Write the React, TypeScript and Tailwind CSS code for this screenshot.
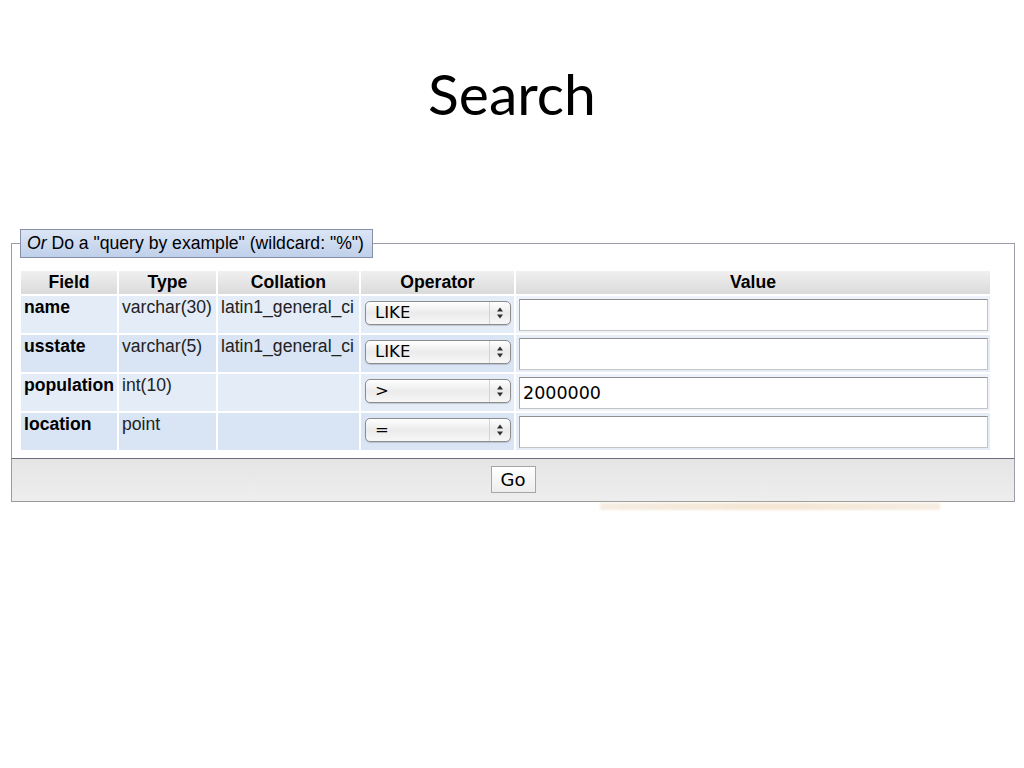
import * as React from "react"

type Row = {
  field: string
  type: string
  collation: string
  operator: string
  value: string
}

const rows: Row[] = [
  { field: "name", type: "varchar(30)", collation: "latin1_general_ci", operator: "LIKE", value: "" },
  { field: "usstate", type: "varchar(5)", collation: "latin1_general_ci", operator: "LIKE", value: "" },
  { field: "population", type: "int(10)", collation: "", operator: ">", value: "2000000" },
  { field: "location", type: "point", collation: "", operator: "=", value: "" },
]

const headers = ["Field", "Type", "Collation", "Operator", "Value"]

function SelectBox({ label }: { label: string }) {
  return (
    <div className="mt-[5px] ml-[4px] flex h-[24px] w-[146px] items-center rounded-[5px] border border-[#8c8c8c] bg-linear-to-b from-white via-[#ebebeb] to-[#f7f7f7] shadow-[0_1px_1px_rgba(0,0,0,0.15)]">
      <span className="flex-1 pl-[9px] font-['DejaVu_Sans',sans-serif] text-[16.5px] leading-none text-black">
        {label}
      </span>
      <span className="flex h-full w-[21px] items-center justify-center border-l border-[#d4d4d4]">
        <svg width="8" height="14" viewBox="0 0 8 14" aria-hidden="true">
          <path d="M4 1.5 L7 5.5 H1 Z" fill="#2e2e2e" />
          <path d="M4 12.5 L7 8.5 H1 Z" fill="#2e2e2e" />
        </svg>
      </span>
    </div>
  )
}

export default function App() {
  return (
    <div className="flex h-[768px] w-[1024px] flex-col bg-white font-['Liberation_Sans',Arial,sans-serif] text-black">
      <h1 className="pt-[65px] text-center font-['Lato',sans-serif] text-[57px] leading-none font-normal">
        Search
      </h1>

      <div className="mt-[107px] ml-[11px] w-[1004px]">
        <fieldset className="border border-[#9c9cab] border-b-[#6e6e80] pb-[8px] pl-[9px]">
          <legend className="-ml-px border border-[#8890a8] bg-linear-to-b from-[#dbe5f5] to-[#bfd0ea] pr-[8px] pl-[6px] py-[3px] text-[17.6px] leading-[21px]">
            <i>Or</i> Do a "query by example" (wildcard: "%")
          </legend>

          <div className="mt-[13px] grid grid-cols-[96px_97px_141px_153px_474px] gap-[2px]">
            {headers.map((h) => (
              <div
                key={h}
                className="h-[23px] bg-linear-to-b from-[#f0f0f0] to-[#dadada] text-center text-[17.6px] leading-[23px] font-bold"
              >
                {h}
              </div>
            ))}

            {rows.map((r, i) => {
              const bg = i % 2 === 0 ? "bg-[#e4ecf8]" : "bg-[#d9e4f4]"
              const light = i % 2 === 0 ? "bg-[#edf2fb]" : "bg-[#e6edf8]"
              return (
                <React.Fragment key={r.field}>
                  <div className={`h-[37px] pt-[1px] pl-[3px] text-[17.6px] leading-[20px] font-bold ${bg}`}>
                    {r.field}
                  </div>
                  <div className={`h-[37px] pt-[1px] pl-[3px] text-[17.6px] leading-[20px] text-[#222] ${bg}`}>
                    {r.type}
                  </div>
                  <div className={`h-[37px] pt-[1px] pl-[3px] text-[17.6px] leading-[20px] text-[#222] ${bg}`}>
                    {r.collation}
                  </div>
                  <div className={`h-[37px] ${bg}`}>
                    <SelectBox label={r.operator} />
                  </div>
                  <div className={`h-[37px] ${light}`}>
                    <input
                      readOnly
                      value={r.value}
                      className="mt-[3px] ml-[3px] h-[32px] w-[469px] border border-[#c4c4c4] border-t-[#8f8f8f] border-l-[#a8a8a8] bg-white pl-[3px] font-['DejaVu_Sans',sans-serif] text-[17.5px] text-black outline-none"
                    />
                  </div>
                </React.Fragment>
              )
            })}
          </div>
        </fieldset>

        <div className="flex h-[43px] justify-center border-x border-b border-[#9c9cab] border-b-[#9a9a9a] bg-linear-to-b from-[#e5e5e5] to-[#eeeeee] pt-[7px]">
          <button className="h-[27px] w-[45px] border border-[#a6a6a6] bg-linear-to-b from-white to-[#ededed] font-['DejaVu_Sans',sans-serif] text-[18px] leading-none text-black">
            Go
          </button>
        </div>

        <div className="mt-px ml-[589px] h-[7px] w-[340px] bg-linear-to-r from-[#f3e6d6] via-[#f1dcc0] to-[#f3e6d6] opacity-70 blur-[1px]" />
      </div>
    </div>
  )
}
